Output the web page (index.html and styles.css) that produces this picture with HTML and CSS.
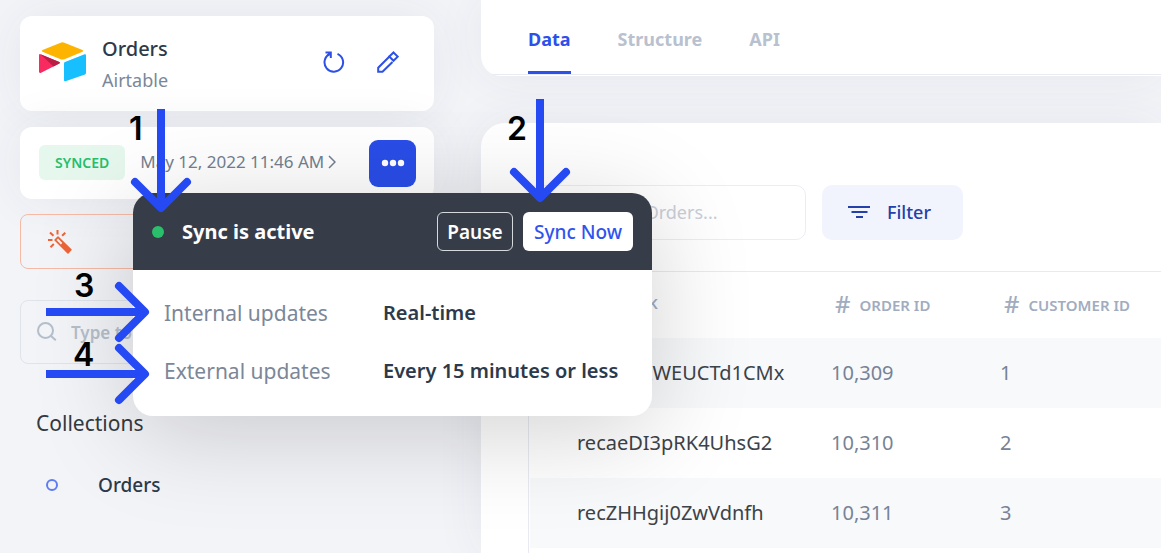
FILE: index.html
```html
<!DOCTYPE html>
<html lang="en">
<head>
<meta charset="utf-8">
<title>Orders</title>
<link rel="stylesheet" href="styles.css">
</head>
<body>
<div class="app">
  <aside class="sidebar">
    <section class="card source">
      <svg class="source-logo" viewBox="0 0 48 40" width="48" height="40" aria-hidden="true">
        <path fill="#fcb400" d="M21.600.7Q23.500 0 25.400.7L43.500 8.100Q44.800 9 43.500 9.800L25.400 17.200Q23.500 17.900 21.600 17.200L3.500 9.800Q2.200 9 3.500 8.100Z"/>
        <path fill="#18bfff" d="M25 21.300Q25 20.300 26 19.900L45.600 12.300Q47 12 47 13.200V31Q47 32 46 32.400L26.500 39.300Q25 39.600 25 38.300Z"/>
        <path fill="#f82b60" d="M0 13.200Q0 11.700 1.500 12.200L20.300 20.100Q21.600 20.800 20.300 21.600L1.600 30.900Q0 31.200 0 29.800Z"/>
        <path fill="#ba1e45" d="M1.500 12.200L20.300 20.100Q21.600 20.800 20.300 21.600L14.500 24.400Z"/>
      </svg>
      <div class="source-text">
        <h1 class="source-name">Orders</h1>
        <p class="source-type">Airtable</p>
      </div>
      <button class="icon-button" aria-label="Refresh">
        <svg viewBox="0 0 22 22" width="22" height="22" fill="none" stroke="#2d50e6" stroke-width="2"><path d="M14.500 2.800a9.300 9.300 0 1 1-7.800.2"/><path d="M2.500 1.500h5.300v5.500M7.700 1.500L4.800 4.500"/></svg>
      </button>
      <button class="icon-button" aria-label="Edit">
        <svg viewBox="0 0 22 22" width="22" height="22" fill="none" stroke="#2d50e6" stroke-width="2"><path d="M12.700 5.200L1.200 16.700V20.800h4.300L15.500 11"/><path d="M16.500 1.500l4.200 4.100-4.200 4.200-4.200-4.300z"/></svg>
      </button>
    </section>

    <section class="card status">
      <span class="badge">SYNCED</span>
      <a class="sync-date" href="#history">May 12, 2022 11:46 AM
        <svg viewBox="0 0 8 14" width="8" height="14" fill="none" stroke="#747f91" stroke-width="1.500" aria-hidden="true"><path d="M1 1l6 6-6 6"/></svg>
      </a>
      <button class="menu-button" aria-label="Sync options">
        <svg viewBox="0 0 24 8" width="24" height="8" fill="#fff"><circle cx="4" cy="4" r="3.200"/><circle cx="12" cy="4" r="3.200"/><circle cx="20" cy="4" r="3.200"/></svg>
      </button>
    </section>

    <button class="magic" aria-label="Magic">
      <svg viewBox="0 0 24 24" width="24" height="24" fill="none" stroke="#ed6436" stroke-width="2"><path d="M9.500 0v4.500M2 2.500l3.500 3.300M17.300 2.800l-3.200 3M0 10h4.500M2.500 17.200l3.300-3.200"/><path fill="#ed6436" stroke="none" fill-rule="evenodd" d="M10.500 6.500L23.500 19.300q.5.500 0 1L20.500 23.500q-.5.500-1 0L6.500 10.500q-.5-.5 0-1L9.500 6.500q.5-.5 1 0zM10 8.600L8.500 10l4.300 4.400 1.500-1.400z"/></svg>
    </button>

    <label class="side-search">
      <svg viewBox="0 0 20 20" width="20" height="20" fill="none" stroke="#b5bfcc" stroke-width="2" aria-hidden="true"><circle cx="8.500" cy="8.500" r="7.500"/><path d="M14 14l4.800 4.300"/></svg>
      <input type="search" placeholder="Type to search" aria-label="Search collections">
    </label>

    <h2 class="side-heading">Collections</h2>
    <a class="collection" href="#orders"><span class="ring"></span>Orders</a>
  </aside>

  <main class="main">
    <nav class="tabs">
      <a class="tab active" href="#data">Data</a>
      <a class="tab" href="#structure">Structure</a>
      <a class="tab" href="#api">API</a>
    </nav>

    <section class="data">
      <div class="toolbar">
        <input class="record-search" type="search" placeholder="Search Orders..." aria-label="Search Orders">
        <button class="filter">
          <svg viewBox="0 0 22 14" width="22" height="14" fill="none" stroke="#2440aa" stroke-width="2" aria-hidden="true"><path d="M0 2h22M3.500 7h16M8 12h7"/></svg>
          Filter
        </button>
      </div>
      <div class="table-wrap">
        <table class="records">
          <thead>
            <tr><th class="col-key">PRIMARY K</th><th class="col-order"><span class="hash">#</span>ORDER ID</th><th><span class="hash">#</span>CUSTOMER ID</th></tr>
          </thead>
          <tbody>
            <tr><td>recdx5RWEUCTd1CMx</td><td>10,309</td><td>1</td></tr>
            <tr><td>recaeDI3pRK4UhsG2</td><td>10,310</td><td>2</td></tr>
            <tr><td>recZHHgij0ZwVdnfh</td><td>10,311</td><td>3</td></tr>
          </tbody>
        </table>
      </div>
    </section>
  </main>
</div>

<div class="popover" role="dialog" aria-label="Sync is active">
  <header class="popover-head">
    <span class="dot"></span>
    <strong class="popover-title">Sync is active</strong>
    <button class="pause">Pause</button>
    <button class="sync-now">Sync Now</button>
  </header>
  <dl class="popover-body">
    <dt>Internal updates</dt><dd>Real-time</dd>
    <dt>External updates</dt><dd>Every 15 minutes or less</dd>
  </dl>
</div>

<svg class="callouts" width="660" height="420" viewBox="0 0 660 420">
  <g class="arrows">
    <path d="M161 109V206"/><path class="head" d="M135 182l26 26 26-26"/>
    <path d="M540 99V196"/><path class="head" d="M514 172l26 26 26-26"/>
    <path d="M46 312H143"/><path class="head" d="M119 286l26 26-26 26"/>
    <path d="M46 374H143"/><path class="head" d="M119 348l26 26-26 26"/>
  </g>
  <g class="numbers">
    <text x="129" y="140">1</text>
    <text x="507" y="140">2</text>
    <text x="74" y="297">3</text>
    <text x="73" y="366">4</text>
  </g>
</svg>
</body>
</html>
```
FILE: styles.css
```css
* { box-sizing: border-box; }

body {
  margin: 0;
  background: #f3f4f8;
  color: #2c3a4b;
  font-family: "Noto Sans", "Open Sans", sans-serif;
  font-size: 20px;
  overflow: hidden;
}

h1, h2, p, dl, dd { margin: 0; }
a { color: inherit; text-decoration: none; }
button, input { font: inherit; }
button { border: 0; padding: 0; cursor: pointer; }
svg { display: block; flex: none; }

.app { display: flex; height: 100vh; overflow: hidden; }

.sidebar {
  flex: none;
  width: 481px;
  padding: 16px 47px 16px 20px;
  display: flex;
  flex-direction: column;
}

.card {
  display: flex;
  align-items: center;
  background: #fff;
  border-radius: 12px;
  box-shadow: 0 0 50px rgba(45, 60, 90, 0.07);
}

.source { height: 95px; padding: 0 35px 3px 19px; }
.source-text { flex: 1; padding: 6px 0 0 15px; }
.source-name { font-size: 20px; font-weight: 500; line-height: 30px; }
.source-type { font-size: 18px; line-height: 32px; color: #7b8798; }
.icon-button { background: none; margin-left: 32px; }

.status { height: 72px; margin-top: 16px; padding: 0 18px 0 19px; }
.badge {
  padding: 0 16px;
  margin-bottom: 2px;
  border-radius: 6px;
  background: #e6f8ee;
  color: #27bf6c;
  font-size: 14px;
  font-weight: 600;
  line-height: 35px;
}
.sync-date {
  flex: 1;
  display: flex;
  align-items: center;
  gap: 4px;
  padding: 0 0 3px 15px;
  color: #747f91;
  font-size: 17px;
  white-space: nowrap;
}
.menu-button {
  display: grid;
  place-items: center;
  width: 47px;
  height: 47px;
  border-radius: 9px;
  background: #294de8;
}

.magic {
  height: 55px;
  margin-top: 15px;
  padding-left: 27px;
  border: 1px solid #f5b9a6;
  border-radius: 8px;
  background: none;
}

.side-search {
  display: flex;
  align-items: center;
  gap: 12px;
  height: 64px;
  margin-top: 31px;
  padding: 0 16px;
  border: 1px solid #dfe3ea;
  border-radius: 8px;
}
.side-search input {
  flex: 1;
  min-width: 0;
  border: 0;
  background: none;
  font-size: 17px;
  font-weight: 600;
}
.side-search input::placeholder { color: #b5bfcc; }

.side-heading {
  margin-top: 44px;
  padding-left: 16px;
  color: #333a40;
  font-size: 21px;
  font-weight: 400;
  line-height: 30px;
}
.collection {
  display: flex;
  align-items: center;
  gap: 40px;
  margin-top: 32px;
  padding-left: 26px;
  font-size: 19px;
  font-weight: 500;
  line-height: 30px;
}
.ring { width: 12px; height: 12px; border: 2px solid #5f7df2; border-radius: 50%; }

.main { flex: 1; min-width: 0; display: flex; flex-direction: column; gap: 47px; }

.tabs {
  display: flex;
  gap: 47px;
  height: 76px;
  flex: none;
  padding: 4px 47px 2px;
  background: linear-gradient(#e9ebf3, #e9ebf3) 0 74px / 100% 1px no-repeat #fff;
  border-bottom-left-radius: 20px;
  box-shadow: 0 0 50px rgba(45, 60, 90, 0.07);
}
.tab {
  border-bottom: 3px solid transparent;
  color: #b8c1cf;
  font-size: 18px;
  font-weight: 700;
  line-height: 70px;
}
.tab.active { color: #2b50ec; border-color: #2b50ec; }

.data {
  flex: 1;
  min-height: 0;
  overflow: hidden;
  padding: 62px 0 0 47px;
  border-top-left-radius: 24px;
  background: #fff;
  box-shadow: 0 0 50px rgba(45, 60, 90, 0.07);
}
.toolbar { display: flex; gap: 16px; height: 55px; }
.record-search {
  width: 278px;
  padding: 0 24px 2px 54px;
  border: 1px solid #ececf4;
  border-radius: 10px;
  background: none;
  font-size: 18px;
}
.record-search::placeholder { color: #c9ced7; }
.filter {
  display: flex;
  align-items: center;
  gap: 17px;
  width: 141px;
  padding: 0 0 2px 26px;
  border-radius: 10px;
  background: #f1f4fc;
  color: #2440aa;
  font-size: 18px;
  font-weight: 500;
}

.table-wrap {
  margin-top: 31px;
  border: 1px solid #e9eaf1;
  border-width: 1px 0 0 1px;
  height: 400px;
  padding-left: 1px;
}
.records { width: 100%; border-collapse: collapse; table-layout: fixed; }
.records th {
  height: 66px;
  padding: 0 0 4px 47px;
  color: #a1acbf;
  font-size: 15px;
  font-weight: 600;
  text-align: left;
  white-space: nowrap;
}
.records th + th { padding-left: 4px; }
.col-key { width: 301px; }
.col-order { width: 169px; }
.hash { margin-right: 9px; font-size: 24px; font-weight: 500; vertical-align: -2px; }
.records td { height: 70px; padding: 0 0 2px; font-size: 20px; color: #778296; }
.records td:first-child { padding-left: 47px; color: #3d4349; }
.records tbody tr:nth-child(odd) { background: #f8f9fb; }

.popover {
  position: absolute;
  top: 193px;
  left: 133px;
  width: 519px;
  border-radius: 20px;
  background: #fff;
  box-shadow: 0 16px 100px rgba(0, 0, 0, 0.18);
}
.popover-head {
  display: flex;
  align-items: center;
  height: 77px;
  padding: 0 19px;
  border-radius: 20px 20px 0 0;
  background: #363d49;
  color: #fff;
}
.dot { width: 12px; height: 12px; border-radius: 50%; background: #29bf6b; }
.popover-title { flex: 1; padding-left: 18px; font-size: 20px; font-weight: 700; }
.pause, .sync-now { height: 39px; border-radius: 6px; font-size: 19px; }
.pause {
  width: 76px;
  border: 1px solid #d5d8dc;
  background: none;
  color: #fff;
  font-weight: 600;
}
.sync-now {
  width: 110px;
  margin-left: 10px;
  background: #fff;
  color: #2f54ee;
  font-weight: 500;
}
.popover-body {
  display: grid;
  grid-template-columns: 219px 1fr;
  row-gap: 28px;
  padding: 28px 0 30px 31px;
  font-size: 21px;
  line-height: 30px;
  white-space: nowrap;
}
.popover-body dt { color: #7b8798; }
.popover-body dd { font-size: 20px; font-weight: 600; }

.callouts { position: absolute; top: 0; left: 0; pointer-events: none; }
.arrows { fill: none; stroke: #2549f3; stroke-width: 8px; }
.head { stroke-linecap: round; stroke-linejoin: round; }
.numbers { fill: #000; font-family: Inter, sans-serif; font-size: 32px; font-weight: 600; }
```
